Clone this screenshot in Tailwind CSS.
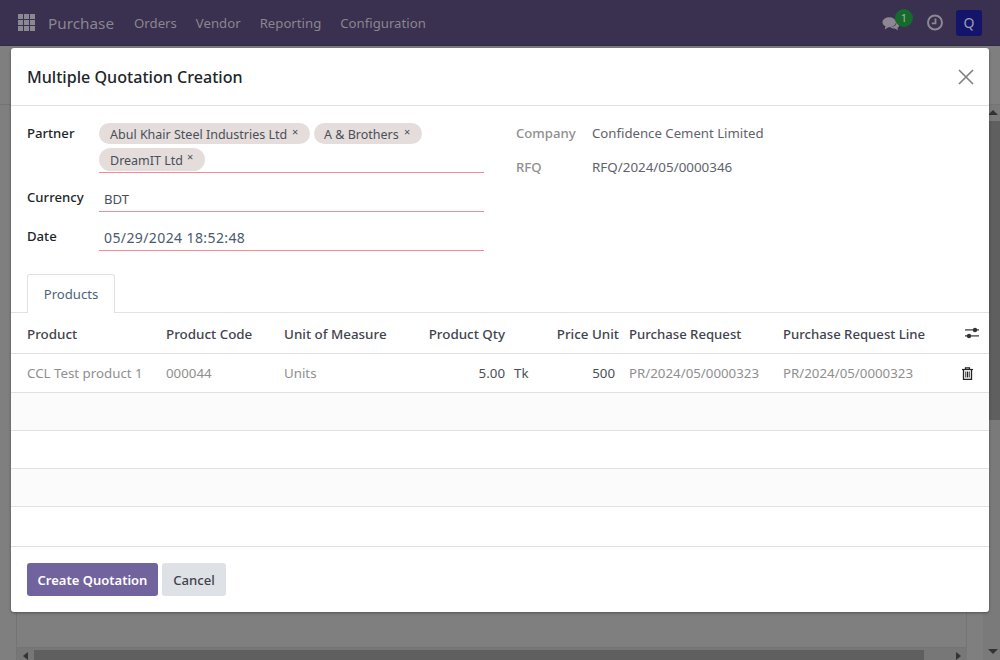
<!doctype html>
<html>
<head>
<meta charset="utf-8">
<script src="https://cdn.jsdelivr.net/npm/@tailwindcss/browser@4"></script>
</head>
<body class="relative w-[1000px] h-[660px] overflow-hidden bg-[#7f7f7f] font-['Noto_Sans',sans-serif] text-[13.15px] text-[#4a4f59]">
  <!-- page behind -->
  <header class="flex items-center h-[46px] bg-[#3a304f] border-b border-[#33294a] text-[#8a8690]">
    <svg class="ml-[18px]" width="17" height="17" viewBox="0 0 17 17" fill="#8c8892"><rect x="0" y="0" width="5" height="5"/><rect x="6" y="0" width="5" height="5"/><rect x="12" y="0" width="5" height="5"/><rect x="0" y="6" width="5" height="5"/><rect x="6" y="6" width="5" height="5"/><rect x="12" y="6" width="5" height="5"/><rect x="0" y="12" width="5" height="5"/><rect x="6" y="12" width="5" height="5"/><rect x="12" y="12" width="5" height="5"/></svg>
    <span class="ml-[13px] pt-[2px] text-[15.3px]">Purchase</span>
    <nav class="flex gap-[19px] ml-[20px] pt-[2px] text-[13.2px]"><span>Orders</span><span>Vendor</span><span>Reporting</span><span>Configuration</span></nav>
    <div class="ml-auto mr-[18px] flex items-center">
      <div class="relative w-[30px] h-[26px] mr-[15px]">
        <svg class="absolute left-0 top-[6px]" width="18" height="16" viewBox="0 0 20 16" fill="#8c8892"><ellipse cx="8" cy="6" rx="7.500" ry="5.500"/><path d="M4 10l-1 4 5-3z"/><path d="M16 5c2 1 3.500 2.500 3 5-.3 1.300-1 2-2 2.500l1 2.500-4-2c-2 0-3.500-.5-5-1.500 4 0 8-2 7-6.500z"/></svg>
        <span class="absolute left-[13px] top-[-1px] flex items-center justify-center w-[18px] h-[18px] rounded-full bg-[#146b2c] text-[11px] leading-none text-[#a9b3a9]">1</span>
      </div>
      <svg class="mr-[13px]" width="16" height="17" viewBox="0 0 16 17" fill="none" stroke="#8c8892"><circle cx="8" cy="8.500" r="7" stroke-width="2"/><path d="M8.500 4.500V9.300H4.800" stroke-width="1.800"/></svg>
      <span class="flex items-center justify-center w-[26px] h-[26px] rounded-[3px] bg-[#15146b] text-[14px] text-[#9c9fb4]">Q</span>
    </div>
  </header>
  <div class="absolute left-0 right-0 top-[104px] h-px bg-[#747474]"></div>
  <div class="absolute left-[16px] top-[105px] w-[951px] h-[555px] border-x border-[#747474]"></div>
  <div class="absolute left-[17px] right-[33px] bottom-[0] h-[13px] bg-[#777777] border-t border-[#747474] flex items-end">
    <span class="ml-[6px] w-0 h-0 border-y-[4px] border-y-transparent border-r-[5px] border-r-[#333]"></span>
    <span class="ml-[6px] w-[890px] h-[10px] bg-[#5f5f5f]"></span>
    <span class="ml-auto mr-[6px] w-0 h-0 border-y-[4px] border-y-transparent border-l-[5px] border-l-[#333]"></span>
  </div>
  <div class="absolute right-0 top-[105px] bottom-0 w-[17px] bg-[#7a7a7a] flex flex-col items-center pb-[6px]">
    <span class="mt-[5px] ml-[3px] w-0 h-0 border-x-[5px] border-x-transparent border-b-[5px] border-b-[#333]"></span>
    <span class="mt-[6px] w-[17px] h-[299px] bg-[#5f5f5f]"></span>
    <span class="mt-auto ml-[3px] w-0 h-0 border-x-[5px] border-x-transparent border-t-[5px] border-t-[#333]"></span>
  </div>

  <!-- dialog -->
  <section class="absolute left-[11px] top-[48px] w-[978px] h-[564px] flex flex-col bg-white rounded-[3px] shadow-[0_1px_3px_rgba(0,0,0,0.35)]">
    <div class="flex items-center justify-between h-[58px] shrink-0 pl-[16px] pr-[15px] border-b border-[#dee2e6]">
      <h1 class="pt-[2px] text-[16.1px] font-medium text-[#212529]">Multiple Quotation Creation</h1>
      <svg width="16" height="16" viewBox="0 0 16 16" stroke="#7f7f7f" stroke-width="1.600"><path d="M1 1l14 14M15 1L1 15"/></svg>
    </div>

    <div class="flex pl-[16px] pt-[17px] h-[168px] shrink-0">
      <div class="w-[457px] flex flex-col">
        <div class="flex">
          <label class="w-[72px] pt-[1px] font-medium text-[#212529]">Partner</label>
          <div class="w-[385px] h-[50px] border-b border-[#f28b96] flex flex-wrap gap-x-[4px] gap-y-[4px] content-start text-[12.5px]">
            <span class="relative flex items-center w-[211px] h-[21px] pl-[11px] rounded-full bg-[#e4dddb] text-[#4a4f59]"><span class="pt-[3px]">Abul Khair Steel Industries Ltd</span><i class="absolute left-[193px] top-[2px] not-italic text-[11px] leading-[14px]">×</i></span>
            <span class="relative flex items-center w-[108px] h-[21px] pl-[10px] rounded-full bg-[#e4dddb] text-[#4a4f59]"><span class="pt-[3px]">A &amp; Brothers</span><i class="absolute left-[90px] top-[2px] not-italic text-[11px] leading-[14px]">×</i></span>
            <span class="relative flex items-center w-[106px] h-[23px] pl-[11px] rounded-full bg-[#e4dddb] text-[#4a4f59]"><span class="pt-[3px]">DreamIT Ltd</span><i class="absolute left-[88px] top-[2px] not-italic text-[11px] leading-[14px]">×</i></span>
          </div>
        </div>
        <div class="flex mt-[14px]">
          <label class="w-[72px] pt-[1px] font-medium text-[#212529]">Currency</label>
          <div class="w-[385px] h-[25px] border-b border-[#f28b96] pl-[5px] pt-[3px] text-[#4a4f59]">BDT</div>
        </div>
        <div class="flex mt-[14px]">
          <label class="w-[72px] pt-[1px] font-medium text-[#212529]">Date</label>
          <div class="w-[385px] h-[25px] border-b border-[#f28b96] pl-[5px] pt-[1px] text-[14px] tracking-[0.4px] text-[#495a6b]">05/29/2024 18:52:48</div>
        </div>
      </div>
      <div class="ml-[32px] pt-[1px] flex flex-col gap-[14px]">
        <div class="flex h-[20px]"><label class="w-[76px] font-medium text-[#8f8f8f]">Company</label><span class="text-[13.2px] text-[#5f636b]">Confidence Cement Limited</span></div>
        <div class="flex h-[20px]"><label class="w-[76px] font-medium text-[#8f8f8f]">RFQ</label><span class="text-[13.4px] leading-[19px] text-[#5f636b]">RFQ/2024/05/0000346</span></div>
      </div>
    </div>

    <div class="flex items-end h-[39px] shrink-0 pl-[16px] border-b border-[#dee2e6]">
      <span class="flex items-center justify-center w-[88px] h-[39px] -mb-px pt-[2px] bg-white border border-b-0 border-[#dee2e6] rounded-t-[3px] text-[#4d6478]">Products</span>
    </div>

    <div class="grid grid-cols-[139px_118px_116px_114px_115px_154px_1fr] font-medium text-[13.4px] text-[#3f444d] h-[41px] pt-[3px] shrink-0 items-center border-b border-[#dee2e6] pl-[16px] relative">
      <span>Product</span><span>Product Code</span><span>Unit of Measure</span><span class="text-right w-[105px]">Product Qty</span><span class="text-right w-[105px]">Price Unit</span><span class="text-[13.15px]">Purchase Request</span><span class="text-[13.15px]">Purchase Request Line</span>
      <svg class="absolute left-[954px] top-[14px]" width="14" height="12" viewBox="0 0 14 12" fill="#333"><rect x="0" y="2.300" width="14" height="1.200"/><rect x="0" y="8.300" width="14" height="1.200"/><circle cx="10" cy="3" r="2.200"/><circle cx="4" cy="9" r="2.200"/></svg>
    </div>
    <div class="grid grid-cols-[139px_118px_116px_114px_115px_154px_1fr] text-[13.3px] text-[#8f8f8f] h-[39px] pt-[1px] shrink-0 items-center border-b border-[#dee2e6] pl-[16px] relative">
      <span>CCL Test product 1</span><span>000044</span><span>Units</span>
      <span class="relative w-[105px] text-right text-[#4a4f59]">5.00<span class="absolute left-[114px] top-0 text-[#4a4f59]">Tk</span></span>
      <span class="w-[101px] text-right text-[#4a4f59]">500</span><span>PR/2024/05/0000323</span><span>PR/2024/05/0000323</span>
      <svg class="absolute left-[951px] top-[13px]" width="11" height="13" viewBox="0 0 11 13" fill="none" stroke="#222"><path d="M0 2.500H11" stroke-width="1.200"/><path d="M3.500 2V.8H7.500V2" stroke-width="1.200"/><path d="M1.500 3V12.300H9.500V3" stroke-width="1.300"/><path d="M3.800 4.500V10.500M5.500 4.500V10.500M7.200 4.500V10.500" stroke-width="1"/></svg>
    </div>
    <div class="h-[38px] shrink-0 bg-[#fbfbfb] border-b border-[#dee2e6]"></div>
    <div class="h-[38px] shrink-0 bg-white border-b border-[#dee2e6]"></div>
    <div class="h-[38px] shrink-0 bg-[#fbfbfb] border-b border-[#dee2e6]"></div>
    <div class="h-[39px] shrink-0 bg-white"></div>

    <div class="flex-1 flex items-start gap-[4px] pl-[16px] pt-[16px] border-t border-[#dee2e6]">
      <button class="h-[33px] w-[131px] pt-[2px] rounded-[3px] bg-[#71639e] text-[13px] text-white font-semibold">Create Quotation</button>
      <button class="h-[33px] w-[64px] pt-[2px] rounded-[3px] bg-[#dee1e6] text-[#3f444d] font-medium">Cancel</button>
    </div>
  </section>
</body>
</html>
